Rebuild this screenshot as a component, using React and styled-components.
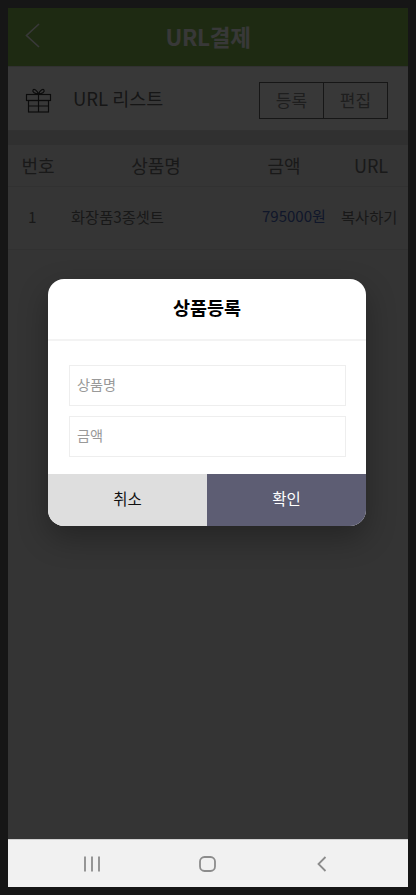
import React from 'react';
import styled, { createGlobalStyle } from 'styled-components';

const GlobalStyle = createGlobalStyle`
  html, body { margin: 0; padding: 0; background: #161616; }
  * { box-sizing: border-box; }
  body { font-family: "Noto Sans CJK KR", "Noto Sans", sans-serif; }
`;

const Frame = styled.div`
  width: 416px;
  height: 895px;
  padding: 8px;
  background: #161616;
`;

const Screen = styled.div`
  position: relative;
  width: 400px;
  height: 879px;
  display: flex;
  flex-direction: column;
  overflow: hidden;
`;

const Page = styled.div`
  flex: 1;
  background: #ececec;
  position: relative;
  display: flex;
  flex-direction: column;
`;

const Header = styled.div`
  height: 58px;
  background: #88bf52;
  display: flex;
  align-items: center;
  justify-content: center;
  position: relative;
`;

const BackButton = styled.svg`
  position: absolute;
  left: 17px;
  top: 15px;
`;

const Title = styled.h1`
  margin: 0 0 2px;
  color: #ffffff;
  font-size: 22.5px;
  font-weight: 700;
  letter-spacing: -0.3px;
`;

const ListBar = styled.div`
  height: 65px;
  background: #ffffff;
  border-top: 1px solid #dddddd;
  border-bottom: 1px solid #dddddd;
  display: flex;
  align-items: center;
  padding: 2px 20px 0 17px;
`;

const ListTitle = styled.span`
  margin: 0 0 4px 20px;
  flex: 1;
  color: #666666;
  font-size: 18.5px;
`;

const ButtonGroup = styled.div`
  display: flex;
  margin-top: 2px;
`;

const SmallButton = styled.div`
  width: 65px;
  height: 37px;
  border: 1.5px solid #666666;
  margin-left: -1px;
  padding-bottom: 2px;
  display: flex;
  align-items: center;
  justify-content: center;
  color: #8a8a8a;
  font-size: 17px;
`;

const Spacer = styled.div`
  height: 14px;
  background: #dcdcdc;
`;

const Row = styled.div`
  display: grid;
  grid-template-columns: 60px 176px 80px 84px;
  align-items: center;
  height: ${({ $h }) => $h}px;
  background: #f0f0f0;
  border-bottom: 1px solid #dddddd;
`;

const HeadCell = styled.div`
  text-align: center;
  color: #737373;
  font-size: 18px;
  white-space: nowrap;
  padding-left: ${({ $pl }) => $pl || 0}px;
  padding-bottom: 2px;
`;

const Cell = styled.div`
  color: ${({ $color }) => $color || '#707070'};
  font-size: ${({ $size }) => $size || 15.3}px;
  white-space: nowrap;
  padding-left: ${({ $pl }) => $pl || 0}px;
  padding-bottom: 5px;
`;

const Scrim = styled.div`
  position: absolute;
  inset: 0;
  background: rgba(0, 0, 0, 0.78);
  display: flex;
  justify-content: center;
  align-items: flex-start;
`;

const Modal = styled.div`
  margin: 271px 2px 0 0;
  width: 318px;
  height: 247px;
  border-radius: 16px;
  background: #ffffff;
  overflow: hidden;
  display: flex;
  flex-direction: column;
  box-shadow: 0 12px 30px rgba(0, 0, 0, 0.3);
`;

const ModalTitle = styled.div`
  height: 62px;
  padding-bottom: 4px;
  border-bottom: 2px solid #f3f3f3;
  display: flex;
  align-items: center;
  justify-content: center;
  color: #000000;
  font-size: 18.5px;
  font-weight: 700;
`;

const ModalBody = styled.div`
  flex: 1;
  padding: 24px 20px 0 21px;
  display: flex;
  flex-direction: column;
  gap: 10px;
`;

const Field = styled.input`
  width: 100%;
  height: 41px;
  border: 1px solid #eeeeee;
  outline: none;
  padding: 0 7px 4px;
  font-family: inherit;
  font-size: 14.2px;
  &::placeholder {
    color: #999999;
    opacity: 1;
  }
`;

const ModalActions = styled.div`
  height: 52px;
  display: grid;
  grid-template-columns: 159px 159px;
`;

const ActionButton = styled.button`
  border: none;
  padding: 0 0 5px;
  font-family: inherit;
  font-size: 15.5px;
  background: ${({ $primary }) => ($primary ? '#5d5d73' : '#dedede')};
  color: ${({ $primary }) => ($primary ? '#ffffff' : '#111111')};
`;

const NavBar = styled.div`
  height: 48px;
  background: #f1f1f1;
  border-top: 1px solid #cfcfcf;
  padding-right: 2px;
  display: grid;
  grid-template-columns: repeat(3, 115px);
  justify-content: center;
  align-items: center;
  justify-items: center;
`;

const GiftIcon = () => (
  <svg width="28" height="26" viewBox="0 0 28 26" fill="none" stroke="#333333" strokeWidth="1.2">
    <rect x="1.5" y="7.5" width="24" height="6" />
    <rect x="3.5" y="13.5" width="20" height="11.5" />
    <path d="M13.5 7.5V25M3.5 19H23.5" />
    <path d="M13.5 7C12 3 9 1.5 8 3 7 5 10 7 13.5 7ZM13.5 7C15 3 18 1.5 19 3 20 5 17 7 13.5 7Z" />
  </svg>
);

export default function App() {
  return (
    <Frame>
      <GlobalStyle />
      <Screen>
        <Page>
          <Header>
            <BackButton width="16" height="26" viewBox="0 0 16 26" fill="none" stroke="#ffffff" strokeWidth="1.6">
              <path d="M14 1 1.5 12.5 14 24" />
            </BackButton>
            <Title>URL결제</Title>
          </Header>
          <ListBar>
            <GiftIcon />
            <ListTitle>URL 리스트</ListTitle>
            <ButtonGroup>
              <SmallButton>등록</SmallButton>
              <SmallButton>편집</SmallButton>
            </ButtonGroup>
          </ListBar>
          <Spacer />
          <Row $h={42}>
            <HeadCell>번호</HeadCell>
            <HeadCell>상품명</HeadCell>
            <HeadCell>금액</HeadCell>
            <HeadCell $pl={10}>URL</HeadCell>
          </Row>
          <Row $h={63}>
            <Cell $pl={20}>1</Cell>
            <Cell $pl={3}>화장품3종셋트</Cell>
            <Cell $color="#4a68c0" $size={15} $pl={18}>795000원</Cell>
            <Cell $pl={17}>복사하기</Cell>
          </Row>
          <Scrim>
            <Modal>
              <ModalTitle>상품등록</ModalTitle>
              <ModalBody>
                <Field placeholder="상품명" />
                <Field placeholder="금액" />
              </ModalBody>
              <ModalActions>
                <ActionButton>취소</ActionButton>
                <ActionButton $primary>확인</ActionButton>
              </ModalActions>
            </Modal>
          </Scrim>
        </Page>
        <NavBar>
          <svg width="16" height="16" viewBox="0 0 16 16" fill="none" stroke="#8c8c8c" strokeWidth="1.8">
            <path d="M1 .5V15.5M8 .5V15.5M15 .5V15.5" />
          </svg>
          <svg width="17" height="16" viewBox="0 0 17 16" fill="none" stroke="#8c8c8c" strokeWidth="1.8">
            <rect x="1" y="1" width="15" height="14" rx="4.5" />
          </svg>
          <svg width="10" height="16" viewBox="0 0 10 16" fill="none" stroke="#8c8c8c" strokeWidth="1.8">
            <path d="M8.5 1 1.5 8 8.5 15" />
          </svg>
        </NavBar>
      </Screen>
    </Frame>
  );
}
